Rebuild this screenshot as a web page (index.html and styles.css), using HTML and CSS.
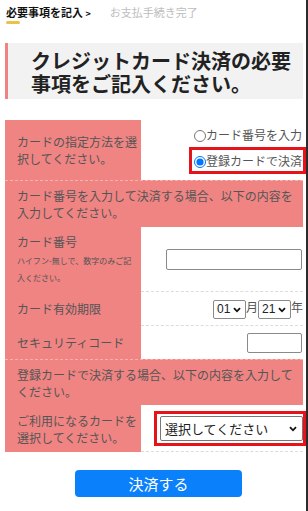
FILE: index.html
```html
<!DOCTYPE html>
<html lang="ja">
<head>
<meta charset="UTF-8" />
<meta name="viewport" content="width=device-width, initial-scale=1" />
<title>クレジットカード決済</title>
<link rel="stylesheet" href="styles.css">
</head>
<body>
<div class="page">

  <div class="steps">
    <span class="step current"><span class="mark">必</span>要事項を記入 <span class="arrow">&gt;</span></span>
    <span class="step">お支払手続き完了</span>
  </div>

  <h1 class="title">クレジットカード決済の必要事項をご記入ください。</h1>

  <form class="pay-form" onsubmit="return false;">
    <table class="pay">
      <colgroup><col class="c-label"><col></colgroup>
      <tr class="r-method">
        <th>カードの指定方法を選択してください。</th>
        <td>
          <label class="opt"><input type="radio" name="method">カード番号を入力</label>
          <label class="opt picked"><input type="radio" name="method" checked>登録カードで決済</label>
        </td>
      </tr>
      <tr class="r-note">
        <td colspan="2" class="note">カード番号を入力して決済する場合、以下の内容を入力してください。</td>
      </tr>
      <tr class="r-number">
        <th>カード番号<span class="hint">ハイフン-無しで、数字のみご記入ください。</span></th>
        <td><input type="text" class="field num"></td>
      </tr>
      <tr class="r-short dashed">
        <th>カード有効期限</th>
        <td>
          <span class="sel-wrap"><select class="sel mini"><option>01</option><option>02</option></select><svg class="chev" viewBox="0 0 8 6" width="8" height="6"><path d="M1 1.2 4 4.3 7 1.2" fill="none" stroke="#111" stroke-width="1.8"/></svg></span>月<span class="sel-wrap"><select class="sel mini"><option>21</option><option>22</option></select><svg class="chev" viewBox="0 0 8 6" width="8" height="6"><path d="M1 1.2 4 4.3 7 1.2" fill="none" stroke="#111" stroke-width="1.8"/></svg></span>年
        </td>
      </tr>
      <tr class="r-short dashed">
        <th>セキュリティコード</th>
        <td><input type="text" class="field cvc"></td>
      </tr>
      <tr class="r-note2">
        <td colspan="2" class="note">登録カードで決済する場合、以下の内容を入力してください。</td>
      </tr>
      <tr class="r-card">
        <th>ご利用になるカードを選択してください。</th>
        <td>
          <div class="picked-box">
            <span class="sel-wrap"><select class="sel card"><option>選択してください</option></select><svg class="chev" viewBox="0 0 8 6" width="8" height="6"><path d="M1 1.2 4 4.3 7 1.2" fill="none" stroke="#111" stroke-width="1.8"/></svg></span>
          </div>
        </td>
      </tr>
    </table>

    <button class="submit">決済する</button>
  </form>

</div>
</body>
</html>
```

FILE: styles.css
```css
html, body {
  margin: 0;
  padding: 0;
}
body {
  font-family: "Noto Sans CJK JP", "Noto Sans", sans-serif;
  color: #555;
  background: #fff;
}
.page {
  box-sizing: border-box;
  width: 308px;
  min-height: 511px;
  padding: 4px 3px 0 5px;
  border-right: 2px solid #2b2b2b;
}

/* steps */
.steps {
  display: flex;
  font-size: 11px;
  line-height: 16px;
  height: 16px;
  padding-left: 1px;
}
.step {
  color: #bdbdbd;
}
.step.current {
  color: #111;
  font-weight: bold;
  margin-right: 19px;
}
.step .arrow {
  font-size: 9px;
}
.mark {
  position: relative;
}
.mark::after {
  content: "";
  position: absolute;
  left: 0;
  right: -3px;
  bottom: -4px;
  height: 3px;
  border-radius: 2px;
  background: #e9c24a;
}

/* title */
.title {
  margin: 23px 0 0;
  padding: 6px 8px 4px 23px;
  background: #f2f2f2;
  border-left: 3px solid #ef8383;
  font-size: 20px;
  line-height: 23px;
  font-weight: bold;
  color: #222;
}

/* table */
.pay {
  margin-top: 21px;
  width: 298px;
  border-collapse: separate;
  border-spacing: 0;
  table-layout: fixed;
  font-size: 12px;
  line-height: 17px;
}
.c-label {
  width: 136px;
}
.pay th {
  background: #ef8483;
  font-weight: normal;
  text-align: left;
  vertical-align: middle;
  padding: 0 4px 0 12px;
  color: #555;
  overflow: hidden;
}
.pay td {
  vertical-align: middle;
  text-align: right;
  padding: 0;
  white-space: nowrap;
}
.pay td.note {
  background: #ef8483;
  text-align: left;
  white-space: normal;
  padding: 0 8px 0 12px;
  border-top: 1px dashed #f5b3b2;
}
.r-method { height: 60px; }
.r-note { height: 47px; }
.r-number { height: 64px; }
.r-short { height: 34px; }
.r-note2 { height: 46px; }
.r-card { height: 47px; }
.dashed td {
  border-top: 1px dashed #dcdcdc;
}
.r-card td {
  border-bottom: 1px dashed #dcdcdc;
}

.hint {
  display: block;
  font-size: 8px;
  line-height: 17px;
  margin-top: 2px;
}

/* radios */
.opt {
  display: block;
  line-height: 17px;
  color: #555;
  padding-right: 1px;
}
.opt input {
  width: 12px;
  height: 12px;
  margin: 0;
  vertical-align: -2px;
}
.opt.picked {
  display: inline-block;
  margin-top: 4px;
  margin-right: -3px;
  padding: 2px 1px 2px 2px;
  border: 3px solid #e5141b;
}

/* inputs */
.field {
  box-sizing: border-box;
  height: 21px;
  border: 1px solid #8a8a8a;
  border-radius: 2px;
  padding: 0 4px;
  font-size: 12px;
  vertical-align: middle;
}
.field.num {
  width: 136px;
  margin-right: 1px;
}
.field.cvc {
  width: 55px;
  height: 20px;
  margin-right: 1px;
}
.sel-wrap {
  position: relative;
  display: inline-block;
  vertical-align: middle;
  line-height: 0;
}
.sel {
  box-sizing: border-box;
  -webkit-appearance: none;
  appearance: none;
  font-family: "Liberation Sans", sans-serif;
  font-size: 12px;
  color: #222;
  border: 1px solid #8a8a8a;
  border-radius: 2px;
  background: #fff;
  padding: 0 0 0 3px;
  margin: 0;
}
.sel.mini {
  width: 33px;
  height: 19px;
}
.chev {
  position: absolute;
  right: 5px;
  top: 7px;
  pointer-events: none;
}
.picked-box {
  display: inline-block;
  margin-right: -3px;
  padding: 2px 0 2px 3px;
  border: 3px solid #e5141b;
  line-height: 0;
}
.sel.card {
  width: 143px;
  height: 25px;
  padding-left: 4px;
  font-family: "Noto Sans CJK JP", sans-serif;
  font-size: 13px;
  color: #222;
  border-color: #777;
}
.picked-box .chev {
  top: 10px;
  right: 6px;
}

/* button */
.submit {
  display: block;
  margin: 18px 0 0 70px;
  width: 167px;
  height: 27px;
  border: none;
  border-radius: 4px;
  background: #0b80fb;
  color: #fff;
  font-family: "Noto Sans CJK JP", sans-serif;
  font-size: 15px;
  cursor: pointer;
}
```
